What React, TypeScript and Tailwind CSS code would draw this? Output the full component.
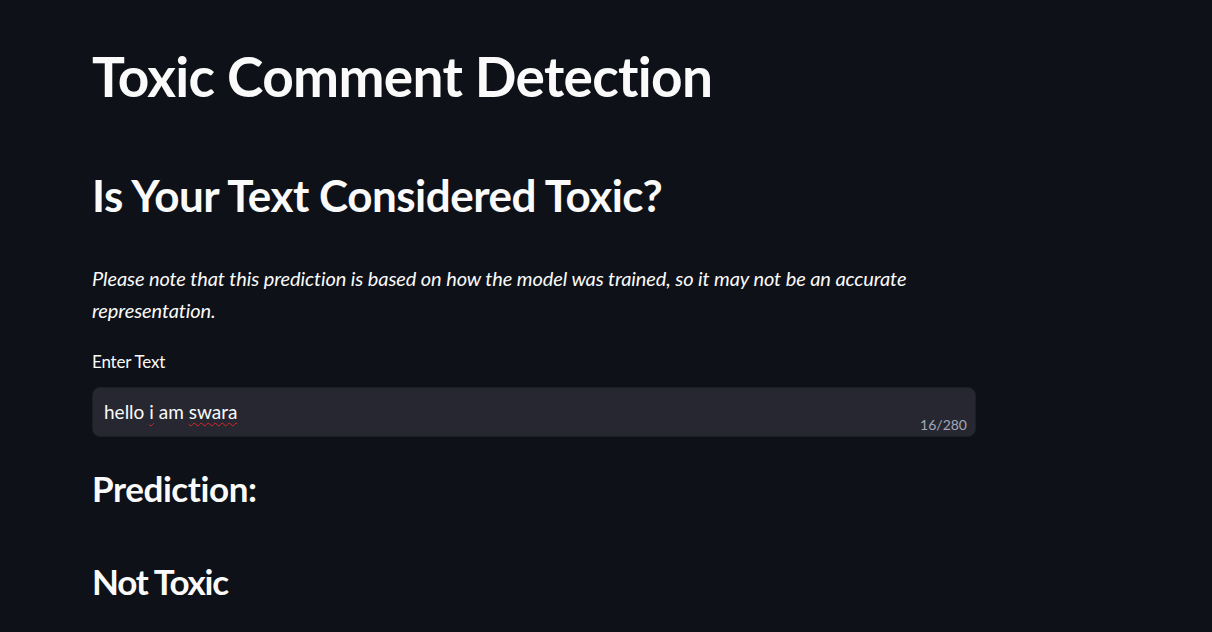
const App = () => {
  return (
    <div className="min-h-screen w-full bg-[#0e1117] text-[#fafafa] font-['Lato','Noto_Sans',sans-serif]">
      <div className="flex flex-col w-[884px] ml-[92px] pt-[43px]">
        <h1 className="text-[55px] font-bold leading-[66px] tracking-[-0.7px]">
          Toxic Comment Detection
        </h1>
        <h2 className="mt-[60px] text-[44px] font-bold leading-[53px] tracking-[-0.5px]">
          Is Your Text Considered Toxic?
        </h2>
        <p className="mt-[40px] text-[20px] italic leading-[32px] tracking-[-0.1px]">
          Please note that this prediction is based on how the model was trained, so it may not be an accurate
          <br />
          representation.
        </p>
        <label className="mt-[25px] text-[17px] leading-[22px] tracking-[-0.2px]">Enter Text</label>
        <div className="relative mt-[14px] h-[50px] w-full rounded-[8px] border border-[#1d1f27] bg-[#262730] flex items-center px-[11px]">
          <span className="text-[19px] leading-[24px]">
            hello{" "}
            <span className="underline decoration-wavy decoration-[#d9262b] decoration-1 underline-offset-[3px]">i</span>{" "}
            am{" "}
            <span className="underline decoration-wavy decoration-[#d9262b] decoration-1 underline-offset-[3px]">swara</span>
          </span>
          <span className="absolute right-[8px] bottom-[2px] text-[14px] leading-[18px] text-[#a3a8b8]">16/280</span>
        </div>
        <h3 className="mt-[30px] text-[35px] font-bold leading-[42px] tracking-[-0.4px]">Prediction:</h3>
        <h3 className="mt-[51px] text-[35px] font-bold leading-[42px] tracking-[-1.2px]">Not Toxic</h3>
      </div>
    </div>
  );
};

export default App;
